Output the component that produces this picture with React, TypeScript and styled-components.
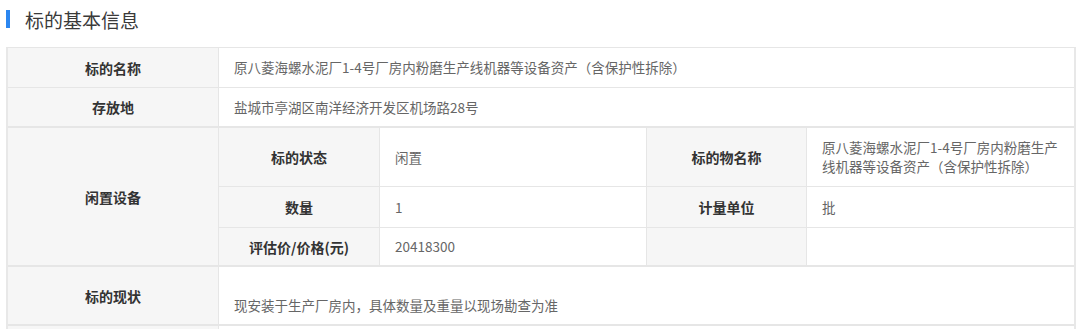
import styled, { createGlobalStyle } from "styled-components";

const GlobalStyle = createGlobalStyle`
  html, body {
    margin: 0;
    padding: 0;
    background: #ffffff;
  }
  body {
    font-family: "Noto Sans CJK SC", "Noto Sans", sans-serif;
    color: #333;
  }
  * {
    box-sizing: border-box;
  }
`;

interface IRowProps {
  $height: number;
  $thick?: boolean;
}

interface ISubRow {
  label: string;
  value: string;
  label2: string;
  value2: string;
  height: number;
}

const subRows: ISubRow[] = [
  {
    label: "标的状态",
    value: "闲置",
    label2: "标的物名称",
    value2: "原八菱海螺水泥厂1-4号厂房内粉磨生产线机器等设备资产（含保护性拆除）",
    height: 59,
  },
  { label: "数量", value: "1", label2: "计量单位", value2: "批", height: 41 },
  { label: "评估价/价格(元)", value: "20418300", label2: "", value2: "", height: 37 },
];

const App: React.FC = () => {
  return (
    <Page>
      <GlobalStyle />
      <Title>
        <TitleBar />
        <span>标的基本信息</span>
      </Title>
      <Table>
        <Row $height={40}>
          <Label>标的名称</Label>
          <Value>原八菱海螺水泥厂1-4号厂房内粉磨生产线机器等设备资产（含保护性拆除）</Value>
        </Row>
        <Row $height={40} $thick>
          <Label>存放地</Label>
          <Value>盐城市亭湖区南洋经济开发区机场路28号</Value>
        </Row>
        <Row $height={139} $thick>
          <Label>闲置设备</Label>
          <SubTable>
            {subRows.map((r, i) => (
              <SubRow key={i} $height={r.height}>
                <SubLabel>{r.label}</SubLabel>
                <SubValue>{r.value}</SubValue>
                <SubLabel>{r.label2}</SubLabel>
                <SubValue $last>{r.value2}</SubValue>
              </SubRow>
            ))}
          </SubTable>
        </Row>
        <Row $height={59} $thick>
          <Label>标的现状</Label>
          <StatusValue>现安装于生产厂房内，具体数量及重量以现场勘查为准</StatusValue>
        </Row>
        <Row $height={40}>
          <Label />
          <Value />
        </Row>
      </Table>
    </Page>
  );
};

const Page = styled.div`
  width: 1080px;
  height: 329px;
  overflow: hidden;
  padding: 0 4px 0 6px;
`;

const Title = styled.div`
  display: flex;
  align-items: center;
  gap: 15px;
  height: 37px;
  font-size: 19px;
  color: #3a3a3a;
  margin-bottom: 10px;
  padding-top: 1px;
`;

const TitleBar = styled.i`
  display: block;
  width: 4px;
  height: 18px;
  background: #2b86f0;
`;

const Table = styled.div`
  border-top: 1px solid #e6e6e6;
  border-left: 2px solid #e8e8e8;
  border-right: 2px solid #e8e8e8;
`;

const Row = styled.div<IRowProps>`
  display: grid;
  grid-template-columns: 211px 1fr;
  height: ${(p) => p.$height}px;
  border-bottom: ${(p) => (p.$thick ? 2 : 1)}px solid #e6e6e6;
`;

const Label = styled.div`
  display: flex;
  align-items: center;
  justify-content: center;
  background: #f6f6f6;
  border-right: 1px solid #e6e6e6;
  font-size: 14px;
  font-weight: 700;
  color: #333;
`;

const Value = styled.div`
  display: flex;
  align-items: center;
  padding: 0 15px;
  font-size: 13.5px;
  line-height: 19px;
  color: #666;
`;

const StatusValue = styled(Value)`
  padding-top: 20px;
`;

const SubTable = styled.div`
  display: flex;
  flex-direction: column;
`;

const SubRow = styled.div<{ $height: number }>`
  display: grid;
  grid-template-columns: 161px 267px 160px 1fr;
  height: ${(p) => p.$height}px;
  border-bottom: 1px solid #e6e6e6;

  &:last-child {
    border-bottom: none;
  }
`;

const SubLabel = styled(Label)``;

const SubValue = styled(Value)<{ $last?: boolean }>`
  border-right: ${(p) => (p.$last ? "none" : "1px solid #e6e6e6")};
`;

export default App;
